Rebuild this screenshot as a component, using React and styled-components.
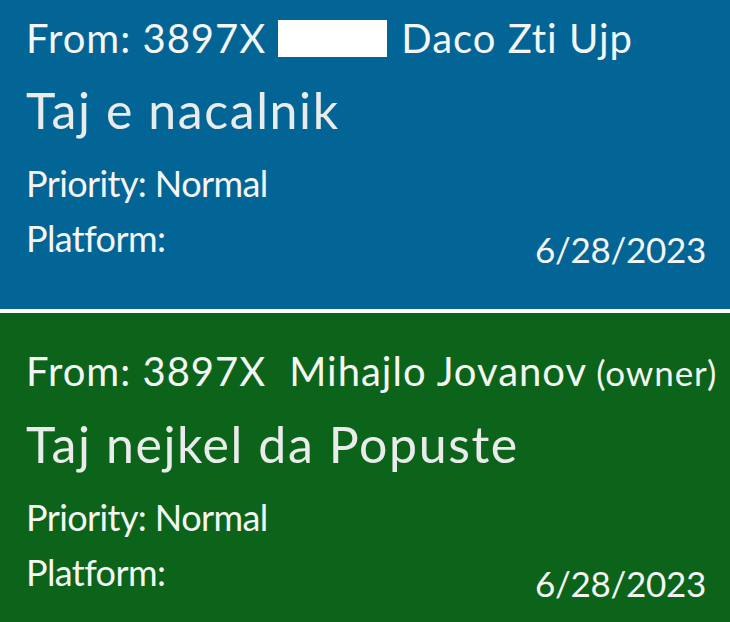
import React from 'react';
import styled, { createGlobalStyle } from 'styled-components';

const GlobalStyle = createGlobalStyle`
  html, body {
    margin: 0;
    padding: 0;
    background: #ffffff;
    overflow: hidden;
  }
  body {
    font-family: Lato, "Open Sans", sans-serif;
  }
`;

const List = styled.div`
  display: flex;
  flex-direction: column;
  gap: 4px;
  margin-top: -20px;
`;

const Card = styled.div`
  background: ${(p) => p.$bg};
  color: #f4f6f4;
  padding: 28px 24px 0 26px;
  display: flex;
  flex-direction: column;
  height: 329px;
  box-sizing: border-box;
`;

const FromLine = styled.div`
  font-size: 40px;
  line-height: 60px;
  letter-spacing: 1px;
  white-space: nowrap;
  display: flex;
  align-items: baseline;

  & > * {
    flex-shrink: 0;
  }
`;

const Redacted = styled.span`
  display: inline-block;
  width: 109px;
  height: 37px;
  background: #ffffff;
  align-self: center;
  margin: 0 14px 0 12px;
`;

const Gap = styled.span`
  display: inline-block;
  width: 23px;
`;

const Owner = styled.span`
  font-size: 35px;
  letter-spacing: 0.9px;
  margin-left: 9px;
`;

const Title = styled.div`
  font-size: 50px;
  line-height: 84px;
  letter-spacing: 1.6px;
  color: #e9ecea;
`;

const Field = styled.div`
  font-size: 36px;
  letter-spacing: -0.6px;
  line-height: ${(p) => p.$lh}px;
`;

const BottomRow = styled.div`
  display: flex;
  justify-content: space-between;
  align-items: flex-start;
`;

const DateText = styled.div`
  font-size: 35px;
  letter-spacing: -0.3px;
  line-height: 69px;
`;

const tickets = [
  {
    id: 1,
    bg: '#026596',
    sender: 'Daco Zti Ujp',
    redacted: true,
    title: 'Taj e nacalnik',
    priority: 'Normal',
    date: '6/28/2023',
  },
  {
    id: 2,
    bg: '#0b641a',
    sender: 'Mihajlo Jovanov',
    owner: true,
    title: 'Taj nejkel da Popuste',
    priority: 'Normal',
    date: '6/28/2023',
  },
];

const TicketCard = ({ ticket }) => (
  <Card $bg={ticket.bg}>
    <FromLine>
      <span>From: 3897X</span>
      {ticket.redacted ? <Redacted /> : <Gap />}
      <span>{ticket.sender}</span>
      {ticket.owner && <Owner>(owner)</Owner>}
    </FromLine>
    <Title>{ticket.title}</Title>
    <Field $lh={63}>Priority: {ticket.priority}</Field>
    <BottomRow>
      <Field $lh={47}>Platform:</Field>
      <DateText>{ticket.date}</DateText>
    </BottomRow>
  </Card>
);

const App = () => (
  <>
    <GlobalStyle />
    <List>
      {tickets.map((t) => (
        <TicketCard ticket={t} key={t.id} />
      ))}
    </List>
  </>
);

export default App;
